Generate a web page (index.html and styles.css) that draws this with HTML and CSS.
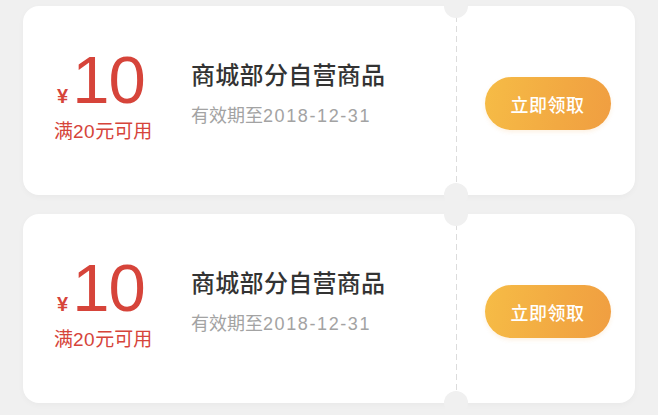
FILE: index.html
```html
<!DOCTYPE html>
<html lang="zh-CN">
<head>
<meta charset="utf-8">
<title>优惠券</title>
<link rel="stylesheet" href="styles.css">
</head>
<body>
<div class="list">
  <div class="coupon">
    <div class="main">
      <div class="amount">
        <div class="value"><span class="yen">¥</span><span class="num">10</span></div>
        <div class="cond">满<span class="digits">20</span>元可用</div>
      </div>
      <div class="info">
        <div class="title">商城部分自营商品</div>
        <div class="date">有效期至<span class="digits">2018-12-31</span></div>
      </div>
    </div>
    <div class="side">
      <button class="btn">立即领取</button>
    </div>
  </div>
  <div class="coupon">
    <div class="main">
      <div class="amount">
        <div class="value"><span class="yen">¥</span><span class="num">10</span></div>
        <div class="cond">满<span class="digits">20</span>元可用</div>
      </div>
      <div class="info">
        <div class="title">商城部分自营商品</div>
        <div class="date">有效期至<span class="digits">2018-12-31</span></div>
      </div>
    </div>
    <div class="side">
      <button class="btn">立即领取</button>
    </div>
  </div>
</div>
</body>
</html>
```
FILE: styles.css
```css
* { box-sizing: border-box; }
html, body { margin: 0; padding: 0; }
body {
  background: #f0f0f0;
  font-family: "Liberation Sans", "Noto Sans CJK SC", sans-serif;
  width: 658px;
  height: 415px;
  overflow: hidden;
}
.list {
  display: flex;
  flex-direction: column;
  gap: 19px;
  padding: 6px 23px 0;
}
.coupon {
  position: relative;
  display: flex;
  height: 189px;
  background: #fff;
  border-radius: 16px;
  box-shadow: 0 2px 6px rgba(0, 0, 0, 0.03);
}
.main {
  width: 433px;
  display: flex;
  align-items: center;
  padding-left: 32px;
}
.amount {
  width: 136px;
  color: #d6443a;
  margin-top: -12px;
}
.value {
  display: flex;
  align-items: baseline;
  line-height: 1;
}
.yen {
  font-size: 20px;
  font-weight: bold;
  margin-right: 4px;
  margin-left: 2px;
}
.num {
  font-size: 67px;
  letter-spacing: -1px;
}
.cond {
  font-size: 19px;
  line-height: 22px;
  margin-top: 8px;
  margin-left: -1px;
}
.cond .digits {
  letter-spacing: 0.5px;
}
.info {
  margin-top: -16px;
}
.title {
  font-family: "Noto Sans CJK SC", sans-serif;
  font-size: 24px;
  font-weight: 500;
  color: #333;
  line-height: 30px;
  letter-spacing: 0.3px;
}
.date {
  font-size: 18px;
  color: #a3a3a3;
  line-height: 22px;
  margin-top: 16px;
}
.date .digits {
  letter-spacing: 1.6px;
}
.side {
  flex: 1;
  display: flex;
  align-items: center;
  justify-content: center;
  padding-left: 4px;
  background-image: linear-gradient(#dcdcdc 60%, transparent 0);
  background-size: 1px 10px;
  background-repeat: repeat-y;
  background-position: 0 0;
}
.coupon::before,
.coupon::after {
  content: "";
  position: absolute;
  left: 421px;
  width: 24px;
  height: 24px;
  border-radius: 50%;
  background: #f0f0f0;
}
.coupon::before { top: -12px; }
.coupon::after { bottom: -12px; }
.btn {
  width: 126px;
  height: 53px;
  margin-top: 6px;
  border: 0;
  border-radius: 27px;
  background: linear-gradient(100deg, #f6bc46 0%, #f2a942 60%, #f09e41 100%);
  color: #fff;
  font-family: "Noto Sans CJK SC", sans-serif;
  font-size: 18px;
  font-weight: 500;
  letter-spacing: 0.5px;
  box-shadow: 0 2px 4px rgba(240, 160, 60, 0.15);
}
```
